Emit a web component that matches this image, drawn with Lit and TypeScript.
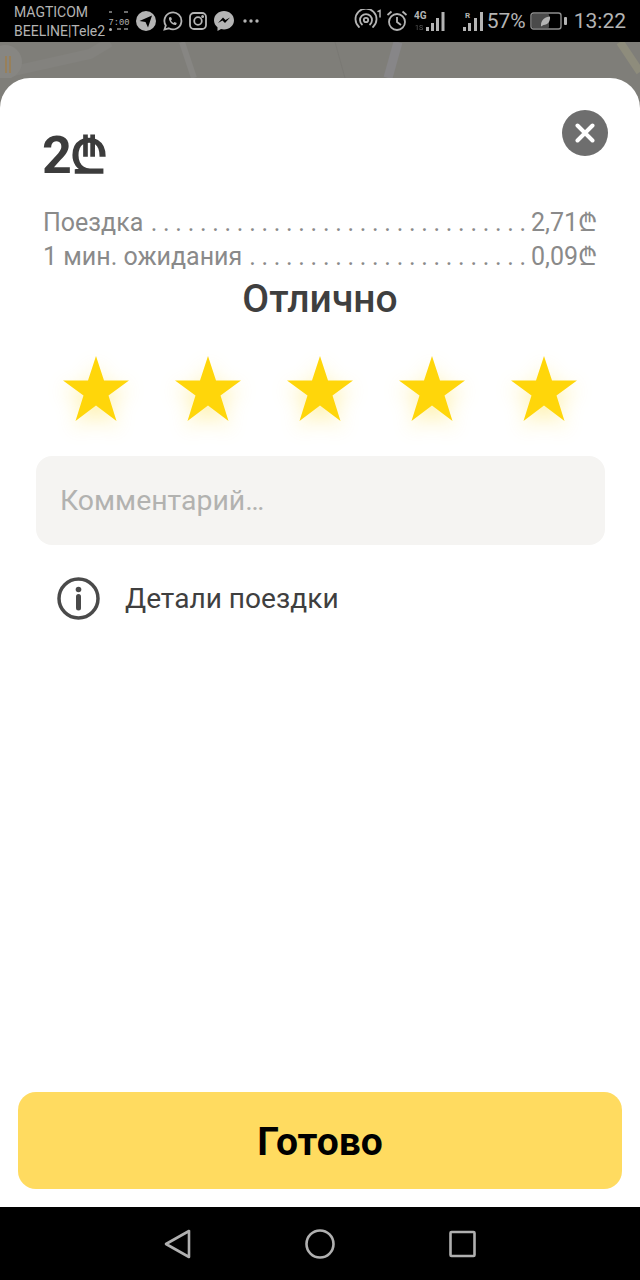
import { LitElement, html, css, svg } from "lit";
import { customElement } from "lit/decorators.js";

const STAR = "M33 0 L41 24.500 L66 24.500 L45.500 39.500 L53.500 65 L33 49.500 L12.500 65 L20.500 39.500 L0 24.500 L25 24.500 Z";

@customElement("app-root")
export class AppRoot extends LitElement {
  static styles = css`
    :host { display: flex; flex-direction: column; width: 640px; height: 1280px; overflow: hidden; font-family: Roboto, "DejaVu Sans", sans-serif; background: #000; }
    .status { height: 42px; flex: none; background: #000; color: #b4b4b4; display: flex; align-items: center; padding: 0 14px; box-sizing: border-box; }
    .carriers { font-size: 14px; line-height: 19px; width: 92px; white-space: nowrap; margin-top: 1px; }
    .left { display: flex; align-items: center; gap: 6px; margin-left: 2px; }
    .spacer { flex: 1; }
    .right { display: flex; align-items: center; }
    .pct { font-size: 21px; margin-left: 2px; }
    .time { font-size: 21px; margin-left: 7px; }
    .map { height: 36px; flex: none; background: #7f7e79; }
    .map svg { display: block; }
    .stage { flex: 1; position: relative; background: #7f7e79; display: flex; flex-direction: column; min-height: 0; }
    .sheet { flex: 1; background: #fff; border-radius: 30px 30px 0 0; display: flex; flex-direction: column; position: relative; min-height: 0; }
    .price { font-size: 52px; font-weight: 700; color: #3c3c3c; line-height: 56px; height: 56px; margin: 50px 0 0 42px; letter-spacing: -2px; }
    .price .cur { font-size: 49px; font-weight: 700; letter-spacing: 0; }
    .close { position: absolute; top: 32px; right: 32px; width: 46px; height: 46px; border-radius: 50%; background: #6e6e6e; display: flex; align-items: center; justify-content: center; }
    .lines { margin: 22px 43px 0 43px; color: #8a8a8a; font-size: 25px; line-height: 34px; }
    .line { display: flex; white-space: nowrap; height: 34px; }
    .dots { flex: 1; text-align: right; padding-right: 5px; letter-spacing: -0.25px; }
    .cur { font-family: "DejaVu Sans", sans-serif; font-size: 25px; line-height: 1; }
    .title { text-align: center; font-size: 39px; font-weight: 500; color: #3f3f3f; line-height: 42px; height: 42px; margin-top: 4px; }
    .stars { display: flex; justify-content: center; gap: 46px; margin-top: 36px; }
    .stars svg { display: block; filter: drop-shadow(0 8px 10px rgba(255, 214, 10, 0.32)); }
    .comment { margin: 34px 35px 0 36px; height: 89px; border-radius: 16px; background: #f5f4f2; color: #b2b2b0; font-size: 28.4px; display: flex; align-items: center; padding-left: 24px; }
    .details { display: flex; align-items: center; margin: 32px 0 0 57px; gap: 25px; font-size: 28.1px; color: #3f3f3f; height: 43px; }
    .details svg { display: block; }
    .btn { margin: auto 18px 18px; height: 97px; border-radius: 18px; background: #ffdb60; color: #000; font-size: 39px; font-weight: 700; display: flex; align-items: center; justify-content: center; padding-top: 3px; box-sizing: border-box; }
    .nav { height: 73px; flex: none; background: #000; display: flex; align-items: center; justify-content: center; gap: 112px; }
    .nav svg { display: block; }
    .clock { font-family: "Liberation Mono", monospace; }
  `;

  render() {
    return html`
      <div class="status">
        <div class="carriers">MAGTICOM<br />BEELINE|Tele2</div>
        <div class="left">
          <svg width="22" height="22" viewBox="0 0 22 22" fill="#b4b4b4">
            <rect x="1" y="1" width="3" height="2" opacity=".6"/><rect x="16" y="1" width="4" height="2" opacity=".6"/>
            <text class="clock" x="0.500" y="14.500" font-size="8.800">7:00</text>
            <rect x="1" y="18" width="3" height="3" rx="1.500"/><rect x="9" y="18" width="4" height="2" opacity=".6"/><rect x="16" y="18" width="4" height="2" opacity=".6"/>
          </svg>
          <svg width="20" height="20" viewBox="0 0 20 20"><circle cx="10" cy="10" r="10" fill="#b4b4b4"/><path d="M3.500 10 L16 4.500 L12 16.500 L9.500 11 Z" fill="#000"/></svg>
          <svg width="21" height="21" viewBox="0 0 21 21" fill="none"><path d="M2.500 18.500 L3.800 14.500 A8.500 8.500 0 1 1 6.800 17.300 Z" stroke="#b4b4b4" stroke-width="1.800"/><path d="M7 6.500 C6.500 10 10 14.500 14 14 L14.800 12 L12.500 11 L11.500 12 C10.500 11.500 9.500 10.500 9 9.200 L10 8.200 L9 6 Z" fill="#b4b4b4"/></svg>
          <svg width="18" height="18" viewBox="0 0 18 18" fill="none" stroke="#b4b4b4" stroke-width="1.800"><rect x="1" y="1" width="16" height="16" rx="4"/><circle cx="9" cy="9" r="3.800"/><circle cx="13.600" cy="4.400" r=".6" fill="#b4b4b4"/></svg>
          <svg width="20" height="20" viewBox="0 0 20 20" style="margin-left:1px"><path d="M10 0 C4.500 0 0 4 0 9.300 C0 12.200 1.300 14.600 3.500 16.200 V20 L7 18.100 C8 18.400 9 18.500 10 18.500 C15.500 18.500 20 14.500 20 9.300 C20 4 15.500 0 10 0 Z" fill="#b4b4b4"/><path d="M4 12 L9 6.500 L11.500 9 L16 6.500 L11 12 L8.500 9.500 Z" fill="#000"/></svg>
          <svg width="16" height="4" viewBox="0 0 16 4" fill="#b4b4b4" style="margin-left:3px"><circle cx="2" cy="2" r="1.700"/><circle cx="8" cy="2" r="1.700"/><circle cx="14" cy="2" r="1.700"/></svg>
        </div>
        <div class="spacer"></div>
        <div class="right">
          <svg width="28" height="24" viewBox="0 0 28 24" fill="none" stroke="#b4b4b4" stroke-width="1.800" stroke-linecap="round">
            <path d="M5 18 A10.500 10.500 0 1 1 19 18"/><path d="M8 15.500 A6 6 0 1 1 16 15.500"/><circle cx="12" cy="11" r="2.200"/>
            <path d="M24 2.500 L26 1.500 V8" stroke-width="1.500"/>
          </svg>
          <svg width="22" height="22" viewBox="0 0 22 22" fill="none" stroke="#b4b4b4" stroke-width="1.800" style="margin-left:4px"><circle cx="11" cy="12" r="8"/><path d="M11 7 V12 L15 15"/><path d="M1.500 5 L5.500 1.500 M20.500 5 L16.500 1.500"/></svg>
          <svg width="32" height="22" viewBox="0 0 32 22" style="margin-left:6px" fill="#b4b4b4">
            <text x="0" y="9" font-size="10" font-weight="700" font-family="Roboto">4G</text>
            <text x="1" y="20" font-size="7" opacity=".5" font-family="Roboto">1S</text>
            <rect x="12" y="17" width="3" height="4"/><rect x="17" y="13" width="3" height="8"/><rect x="22" y="8" width="3" height="13"/><rect x="27.500" y="2" width="3" height="19"/>
          </svg>
          <svg width="22" height="22" viewBox="0 0 22 22" style="margin-left:17px" fill="#b4b4b4">
            <text x="2" y="8" font-size="8" font-weight="700" font-family="Roboto">R</text>
            <rect x="0" y="17" width="3" height="4"/><rect x="5" y="13" width="3" height="8"/><rect x="11" y="8" width="3" height="13"/><rect x="17" y="2" width="3" height="19"/>
          </svg>
          <span class="pct">57%</span>
          <svg width="37" height="18" viewBox="0 0 37 18" style="margin-left:4px">
            <rect x="1" y="1" width="30" height="16" rx="2.500" fill="#000" stroke="#8e8e8e" stroke-width="1.400"/>
            <rect x="2" y="2" width="17" height="14" rx="1" fill="#4a4a4a"/>
            <rect x="34" y="5" width="3" height="8" rx="1" fill="#b4b4b4"/>
            <path d="M11 13 C11 8 15 5 20 4.500 C20.500 9 18 13 13.500 13 L11 14.500 Z" fill="#b4b4b4"/>
          </svg>
          <span class="time">13:22</span>
        </div>
      </div>
      <div class="map">
        <svg width="640" height="36" viewBox="0 0 640 36" fill="none">
          <path d="M0 32 L90 12 L110 0" stroke="#83827e" stroke-width="10"/>
          <path d="M182 0 L194 36" stroke="#878683" stroke-width="6"/>
          <path d="M398 0 L388 36" stroke="#878688" stroke-width="9"/>
          <path d="M335 0 L345 36" stroke="#7a7974" stroke-width="1"/>
          <path d="M620 0 L640 30" stroke="#8e8c7c" stroke-width="8"/>
          <circle cx="5" cy="20" r="17" fill="#878682"/>
          <path d="M6 14 V31 M10 14 V31" stroke="#98805a" stroke-width="2"/>
        </svg>
      </div>
      <div class="stage">
        <div class="sheet">
          <div class="price">2<span class="cur">₾</span></div>
          <div class="close">
            <svg width="20" height="20" viewBox="0 0 20 20"><path d="M2.500 2.500 L17.500 17.500 M17.500 2.500 L2.500 17.500" stroke="#fff" stroke-width="4" stroke-linecap="round"/></svg>
          </div>
          <div class="lines">
            <div class="line"><span>Поездка</span><span class="dots">${". ".repeat(31)}</span><span>2,71<span class="cur">₾</span></span></div>
            <div class="line"><span>1 мин. ожидания</span><span class="dots">${". ".repeat(23)}</span><span>0,09<span class="cur">₾</span></span></div>
          </div>
          <div class="title">Отлично</div>
          <div class="stars">
            ${[0, 1, 2, 3, 4].map(() => html`<svg width="66" height="66" viewBox="0 0 66 66">${svg`<path d=${STAR} fill="#ffd60a"/>`}</svg>`)}
          </div>
          <div class="comment">Комментарий…</div>
          <div class="details">
            <svg width="43" height="43" viewBox="0 0 43 43" fill="none">
              <circle cx="21.500" cy="21.500" r="19.500" stroke="#4a4a4a" stroke-width="3.500"/>
              <circle cx="21.500" cy="12.500" r="2.800" fill="#4a4a4a"/>
              <path d="M21.500 19.500 V31" stroke="#4a4a4a" stroke-width="5" stroke-linecap="round"/>
            </svg>
            <span>Детали поездки</span>
          </div>
          <div class="btn">Готово</div>
        </div>
      </div>
      <div class="nav">
        <svg width="30" height="32" viewBox="0 0 30 32" fill="none" stroke="#b0b0b0" stroke-width="2.600" stroke-linejoin="round"><path d="M26 3 V29 L3 16 Z"/></svg>
        <svg width="30" height="30" viewBox="0 0 30 30" fill="none" stroke="#b0b0b0" stroke-width="2.600"><circle cx="15" cy="15" r="13.500"/></svg>
        <svg width="30" height="28" viewBox="0 0 30 28" fill="none" stroke="#b0b0b0" stroke-width="2.600" stroke-linejoin="round"><rect x="3.500" y="2" width="24" height="24" rx="1"/></svg>
      </div>
    `;
  }
}
